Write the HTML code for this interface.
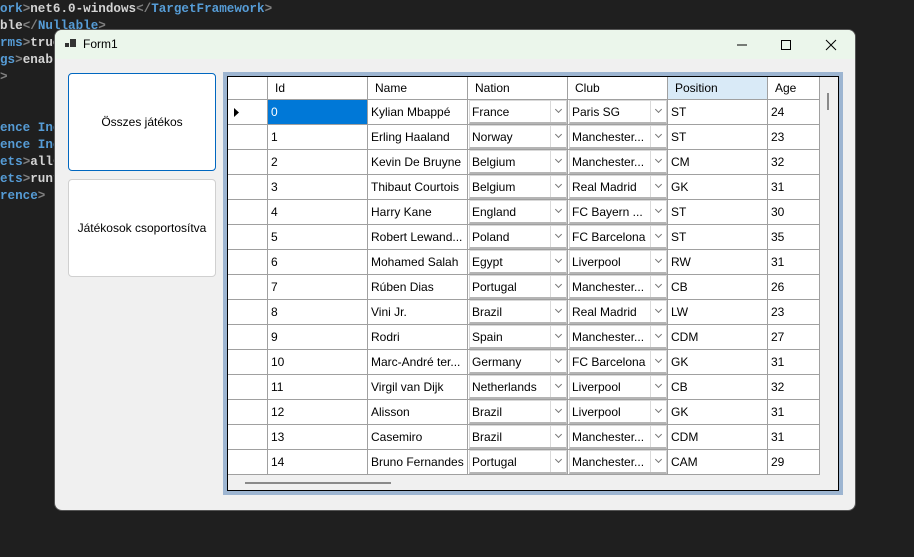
<!DOCTYPE html>
<html><head><meta charset="utf-8"><style>
*{margin:0;padding:0;box-sizing:border-box}
body{width:914px;height:557px;background:#1f1f1f;position:relative;overflow:hidden;font-family:"Segoe UI","Liberation Sans","DejaVu Sans",sans-serif}
.code{position:absolute;left:0;font:bold 12.6px "Liberation Mono","DejaVu Sans Mono",monospace;color:#d4d4d4;white-space:pre;line-height:17px}
.g{color:#808080}.b{color:#569cd6}
.win{position:absolute;left:55px;top:30px;width:800px;height:480px;background:#f0f0f0;border-radius:7px;overflow:hidden;box-shadow:0 0 0 1px #555}
.title{position:absolute;left:0;top:0;width:800px;height:29px;background:#ebf6eb;font-size:12px;color:#000}
.btn{position:absolute;background:#fff;border:1px solid #d0d0d0;border-radius:4px;font-size:12px;display:flex;align-items:center;justify-content:center;color:#000}
.frame{position:absolute;left:168px;top:42px;width:620px;height:423px;background:#9db5d1}
.inner{position:absolute;left:4px;top:4px;width:612px;height:415px;background:#f0f0f0;border:1px solid #000;overflow:hidden}
.c{position:absolute;font-size:12px;color:#000;line-height:24px;padding-left:3px;white-space:nowrap;overflow:hidden;border-right:1px solid #a0a0a0;border-bottom:1px solid #a0a0a0;background:#fff}
.h{line-height:22px;padding-left:7px}
.cb{position:absolute;background:#fff;border-top:1px solid #d9d9d9;border-left:1px solid #d9d9d9;border-bottom:2px solid #b5b5b5;border-right:1px solid #d0d0d0;font-size:12px;line-height:22px;padding-left:2px;white-space:nowrap;overflow:hidden}
.dd{position:absolute;right:0;top:0;width:16px;height:22px;border-left:1px solid #d9d9d9;background:#fff}
.dd:after{content:"";position:absolute;left:5px;top:6px;width:4px;height:4px;border-right:1px solid #777;border-bottom:1px solid #777;transform:rotate(45deg)}
</style></head><body>
<div class="code" style="top:1px"><span class="b">ork</span><span class="g">&gt;</span>net6.0-windows<span class="g">&lt;/</span><span class="b">TargetFramework</span><span class="g">&gt;</span>
<span>ble</span><span class="g">&lt;/</span><span class="b">Nullable</span><span class="g">&gt;</span>
<span class="b">rms</span><span class="g">&gt;</span>true
<span class="b">gs</span><span class="g">&gt;</span>enabl
<span class="g">&gt;</span>


<span class="b">ence Inc</span>
<span class="b">ence Inc</span>
<span class="b">ets</span><span class="g">&gt;</span>all<span class="g">&lt;</span>
<span class="b">ets</span><span class="g">&gt;</span>runt
<span class="b">rence</span><span class="g">&gt;</span></div>
<div class="win">
<div class="title">
<svg style="position:absolute;left:10px;top:9px" width="12" height="11"><rect x="0" y="4" width="4" height="4" fill="#333"/><rect x="5" y="0" width="6" height="8" fill="#333"/></svg>
<span style="position:absolute;left:28px;top:7px">Form1</span>
<svg style="position:absolute;left:680px;top:8px" width="110" height="14"><line x1="2" y1="7" x2="12" y2="7" stroke="#000"/><rect x="46.5" y="2.5" width="9" height="9" fill="none" stroke="#000"/><path d="M91 2L101 12M101 2L91 12" stroke="#000"/></svg>
</div>
<div class="btn" style="left:13px;top:43px;width:148px;height:98px;border-color:#0067c0">Összes játékos</div>
<div class="btn" style="left:13px;top:149px;width:148px;height:98px">Játékosok csoportosítva</div>
<div class="frame"><div class="inner" id="g"></div></div>
</div>
<script>
var rows=[["0","Kylian Mbappé","France","Paris SG","ST","24"],["1","Erling Haaland","Norway","Manchester...","ST","23"],["2","Kevin De Bruyne","Belgium","Manchester...","CM","32"],["3","Thibaut Courtois","Belgium","Real Madrid","GK","31"],["4","Harry Kane","England","FC Bayern ...","ST","30"],["5","Robert Lewand...","Poland","FC Barcelona","ST","35"],["6","Mohamed Salah","Egypt","Liverpool","RW","31"],["7","Rúben Dias","Portugal","Manchester...","CB","26"],["8","Vini Jr.","Brazil","Real Madrid","LW","23"],["9","Rodri","Spain","Manchester...","CDM","27"],["10","Marc-André ter...","Germany","FC Barcelona","GK","31"],["11","Virgil van Dijk","Netherlands","Liverpool","CB","32"],["12","Alisson","Brazil","Liverpool","GK","31"],["13","Casemiro","Brazil","Manchester...","CDM","31"],["14","Bruno Fernandes","Portugal","Manchester...","CAM","29"]];
var g=document.getElementById('g'),h='';
var xs=[0,40,140,240,340,440,540],ws=[40,100,100,100,100,100,52];
var hd=["","Id","Name","Nation","Club","Position","Age"];
for(var i=0;i<7;i++)h+='<div class="c h" style="left:'+xs[i]+'px;top:0;width:'+ws[i]+'px;height:23px;'+(i==5?'background:#d9eaf7':'')+'">'+hd[i]+'</div>';
rows.forEach(function(r,j){var t=23+25*j;
h+='<div class="c" style="left:0;top:'+t+'px;width:40px;height:25px">'+(j==0?'<svg style="position:absolute;left:6px;top:8px" width="6" height="9"><path d="M0 0L5 4.5L0 9Z" fill="#000"/></svg>':'')+'</div>';
for(var k=0;k<6;k++){var x=xs[k+1],w=ws[k+1];
var st=(k==0&&j==0)?'background:#0078d7;color:#fff;':'';
if(k==2||k==3){h+='<div class="c" style="left:'+x+'px;top:'+t+'px;width:'+w+'px;height:25px"></div><div class="cb" style="left:'+(x+1)+'px;top:'+t+'px;width:'+(w-2)+'px;height:24px">'+r[k]+'<div class="dd"></div></div>';}
else h+='<div class="c" style="left:'+x+'px;top:'+t+'px;width:'+w+'px;height:25px;'+st+'">'+r[k]+'</div>';}
});
h+='<div style="position:absolute;left:17px;top:405px;width:146px;height:2px;background:#8a8a8a"></div>';
h+='<div style="position:absolute;left:599px;top:16px;width:2px;height:17px;background:#8a8a8a"></div>';
g.innerHTML=h;
</script>
</body></html>
